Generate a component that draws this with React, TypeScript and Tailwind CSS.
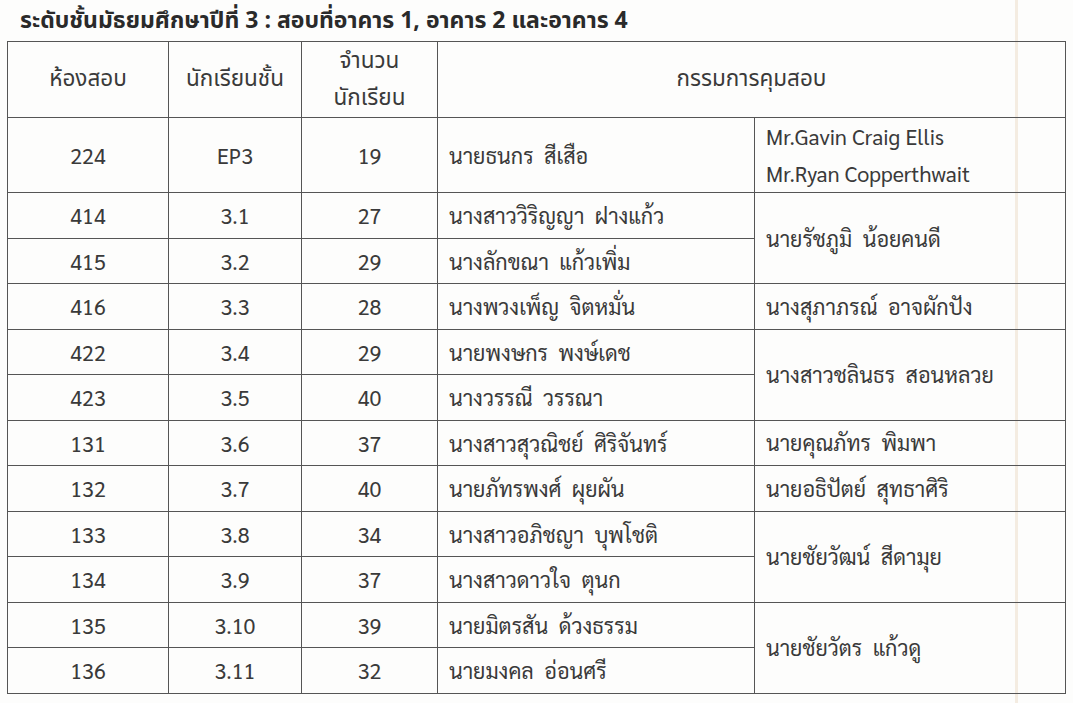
import React from 'react';

type Row = { room: string; cls: string; count: string; proctor: string; second?: string[]; span?: number };

const rows: Row[] = [
  { room: '224', cls: 'EP3', count: '19', proctor: 'นายธนกร  สีเสือ', second: ['Mr.Gavin Craig Ellis', 'Mr.Ryan Copperthwait'], span: 1 },
  { room: '414', cls: '3.1', count: '27', proctor: 'นางสาววิริญญา  ฝางแก้ว', second: ['นายรัชภูมิ  น้อยคนดี'], span: 2 },
  { room: '415', cls: '3.2', count: '29', proctor: 'นางลักขณา  แก้วเพิ่ม' },
  { room: '416', cls: '3.3', count: '28', proctor: 'นางพวงเพ็ญ  จิตหมั่น', second: ['นางสุภาภรณ์  อาจผักปัง'], span: 1 },
  { room: '422', cls: '3.4', count: '29', proctor: 'นายพงษกร  พงษ์เดช', second: ['นางสาวชลินธร  สอนหลวย'], span: 2 },
  { room: '423', cls: '3.5', count: '40', proctor: 'นางวรรณี  วรรณา' },
  { room: '131', cls: '3.6', count: '37', proctor: 'นางสาวสุวณิชย์  ศิริจันทร์', second: ['นายคุณภัทร  พิมพา'], span: 1 },
  { room: '132', cls: '3.7', count: '40', proctor: 'นายภัทรพงศ์  ผุยผัน', second: ['นายอธิปัตย์  สุทธาศิริ'], span: 1 },
  { room: '133', cls: '3.8', count: '34', proctor: 'นางสาวอภิชญา  บุพโชติ', second: ['นายชัยวัฒน์  สีดามุย'], span: 2 },
  { room: '134', cls: '3.9', count: '37', proctor: 'นางสาวดาวใจ  ตุนก' },
  { room: '135', cls: '3.10', count: '39', proctor: 'นายมิตรสัน  ด้วงธรรม', second: ['นายชัยวัตร  แก้วดู'], span: 2 },
  { room: '136', cls: '3.11', count: '32', proctor: 'นายมงคล  อ่อนศรี' },
];

// สแกนจากเอกสาร ใช้ฟอนต์ไทยที่มีในเครื่อง
const font = { fontFamily: '"Sarabun", "TH Sarabun New", "Noto Sans Thai", "Loma", "Garuda", "Tahoma", "Noto Sans", sans-serif' };
const headFont = { fontFamily: '"Tahoma", "Noto Sans Thai", "Loma", "Garuda", "Noto Sans", sans-serif' };

const cell = 'border-[1.5px] border-[#555555]';

export default function App() {
  return (
    <div className="w-[1073px] h-[703px] bg-[#fdfdfc] text-[#3a3a3a] overflow-hidden relative">
      <div className="absolute left-[1015px] top-0 h-full w-[3px] bg-[#f4ece1]" />
      <div className="pl-[7px] pt-[6px] relative">
        <h1 className="text-[23px] font-bold leading-[30px] h-[35px] pl-[13px] text-[#2a2a2a]" style={headFont}>
          ระดับชั้นมัธยมศึกษาปีที่ 3 : สอบที่อาคาร 1, อาคาร 2 และอาคาร 4
        </h1>
        <table className="border-collapse w-[1058px] table-fixed text-[21.5px]" style={font}>
          <colgroup>
            <col className="w-[161px]" />
            <col className="w-[133px]" />
            <col className="w-[136px]" />
            <col className="w-[317px]" />
            <col className="w-[311px]" />
          </colgroup>
          <thead>
            <tr className="h-[76px]">
              <th className={`${cell} font-normal text-center text-[22.5px]`} style={headFont}>ห้องสอบ</th>
              <th className={`${cell} font-normal text-center text-[22.5px]`} style={headFont}>นักเรียนชั้น</th>
              <th className={`${cell} font-normal text-center text-[22.5px] leading-[37px]`} style={headFont}>
                จำนวน<br />นักเรียน
              </th>
              <th colSpan={2} className={`${cell} font-normal text-center text-[22.5px]`} style={headFont}>กรรมการคุมสอบ</th>
            </tr>
          </thead>
          <tbody>
            {rows.map((r, i) => (
              <tr key={r.room} className={i === 0 ? 'h-[74px]' : 'h-[45.5px]'}>
                <td className={`${cell} text-center`}>{r.room}</td>
                <td className={`${cell} text-center`}>{r.cls}</td>
                <td className={`${cell} text-center`}>{r.count}</td>
                <td className={`${cell} pl-[11px] whitespace-pre`}>{r.proctor}</td>
                {r.second && (
                  <td rowSpan={r.span} className={`${cell} pl-[11px] whitespace-pre leading-[37px]`}>
                    {r.second.map((s, k) => (
                      <div key={k}>{s}</div>
                    ))}
                  </td>
                )}
              </tr>
            ))}
          </tbody>
        </table>
      </div>
    </div>
  );
}
